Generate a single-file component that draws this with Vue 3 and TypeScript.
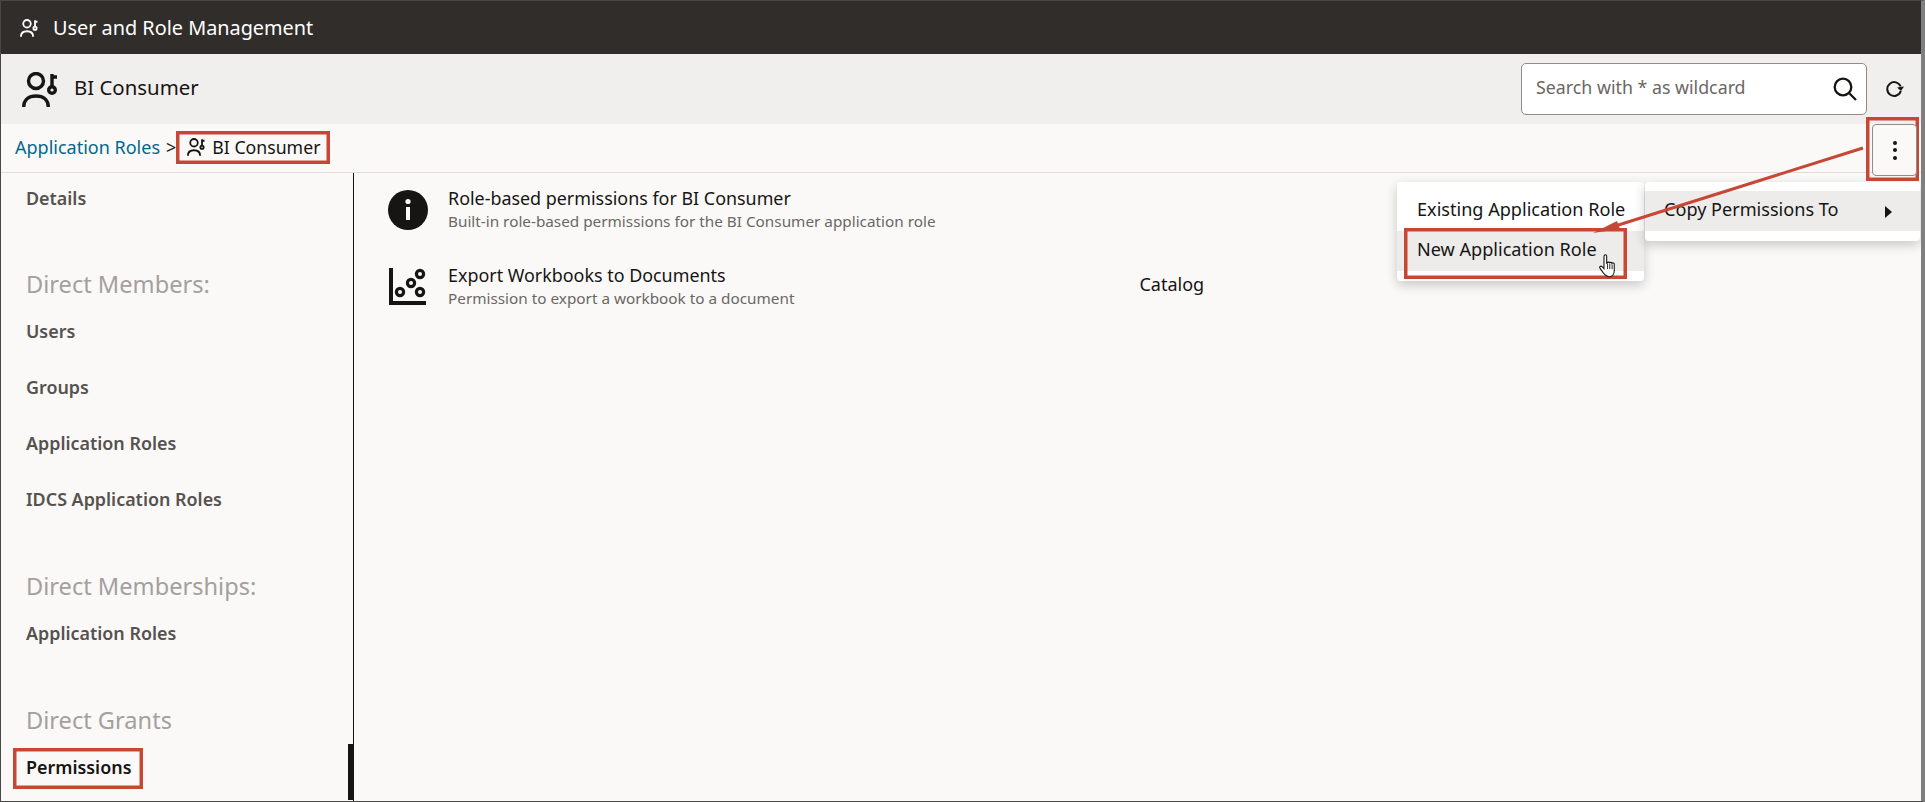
<script setup lang="ts">
const sections = [
  { title: '', items: ['Details'] },
  { title: 'Direct Members:', items: ['Users', 'Groups', 'Application Roles', 'IDCS Application Roles'] },
  { title: 'Direct Memberships:', items: ['Application Roles'] },
  { title: 'Direct Grants', items: ['Permissions'] }
]
</script>

<template>
  <div class="page">
    <header class="topbar">
      <svg class="ico-top" viewBox="0 0 36 35" fill="none" stroke="#fff" stroke-width="3.600">
        <circle cx="14" cy="9" r="7.500" />
        <path d="M1.800 35c0-7 5-11 12.200-11s12.200 4 12.200 11" />
        <circle cx="30" cy="18" r="3.300" />
        <path d="M30 2v12M30 5h5" />
      </svg>
      <span>User and Role Management</span>
    </header>

    <section class="titlebar">
      <svg class="ico-title" viewBox="0 0 36 35" fill="none" stroke="#161513" stroke-width="3.400">
        <circle cx="14" cy="9" r="7.500" />
        <path d="M1.700 35c0-7 5-11 12.300-11s12.300 4 12.300 11" />
        <circle cx="30" cy="18" r="3.300" />
        <path d="M30 2v12M30 5h5" />
      </svg>
      <span class="title">BI Consumer</span>
      <div class="search">
        <span class="placeholder">Search with * as wildcard</span>
        <svg class="ico-search" viewBox="0 0 24 24" fill="none" stroke="#161513" stroke-width="2.300">
          <circle cx="10" cy="10" r="8.300" />
          <path d="M16 16l7 7" />
        </svg>
      </div>
      <svg class="ico-refresh" viewBox="0 0 18 16" fill="none" stroke="#161513" stroke-width="2">
        <path d="M14.600 5.500A6.900 6.900 0 1 0 14.800 10" />
        <path d="M18 5.500l-3 4.500-4-3.500z" fill="#161513" stroke="none" />
      </svg>
    </section>

    <nav class="crumbbar">
      <a class="crumb-link">Application Roles</a>
      <span class="sep">&gt;</span>
      <svg class="ico-crumb" viewBox="0 0 36 35" fill="none" stroke="#161513" stroke-width="3.600">
        <circle cx="14" cy="9" r="7.500" />
        <path d="M1.800 35c0-7 5-11 12.200-11s12.200 4 12.200 11" />
        <circle cx="30" cy="18" r="3.300" />
        <path d="M30 2v12M30 5h5" />
      </svg>
      <span class="crumb-cur">BI Consumer</span>
      <button class="kebab" aria-label="More">
        <i></i><i></i><i></i>
      </button>
    </nav>

    <main class="body">
      <aside class="side">
        <div v-for="s in sections" :key="s.title" class="group">
          <h3 v-if="s.title">{{ s.title }}</h3>
          <a v-for="it in s.items" :key="it" class="side-item" :class="{ active: it === 'Permissions' }">{{ it }}</a>
        </div>
        <div class="side-mark"></div>
      </aside>
      <div class="content">
        <div class="row">
          <svg class="ico-row" viewBox="0 0 40 40">
            <circle cx="20" cy="20" r="20" fill="#161513" />
            <circle cx="20" cy="11.500" r="2.600" fill="#fbf9f8" />
            <rect x="18" y="17" width="4" height="13" fill="#fbf9f8" />
          </svg>
          <div class="row-text">
            <div class="row-title">Role-based permissions for BI Consumer</div>
            <div class="row-sub">Built-in role-based permissions for the BI Consumer application role</div>
          </div>
        </div>
        <div class="row second">
          <svg class="ico-row ico-chart" viewBox="0 0 40 40" fill="none" stroke="#161513" stroke-width="3.200">
            <path d="M3 0v35h35" stroke-width="4" />
            <circle cx="12" cy="24" r="3.600" />
            <circle cx="23" cy="15" r="3.600" />
            <circle cx="32" cy="6" r="3.600" />
            <circle cx="32" cy="24" r="3.600" />
          </svg>
          <div class="row-text">
            <div class="row-title">Export Workbooks to Documents</div>
            <div class="row-sub">Permission to export a workbook to a document</div>
          </div>
          <div class="row-cat">Catalog</div>
        </div>

        <div class="menu menu-sub">
          <div class="mi">Existing Application Role</div>
          <div class="mi active">New Application Role</div>
        </div>
        <div class="menu menu-main">
          <div class="mi active main-item">
            <span>Copy Permissions To</span>
            <span class="tri"></span>
          </div>
        </div>
      </div>
    </main>

    <svg class="annot" width="1925" height="802" viewBox="0 0 1925 802" fill="none">
      <rect x="177.750" y="132.750" width="150.500" height="29.500" stroke="#c74634" stroke-width="3.500" />
      <rect x="14.750" y="749.750" width="126.500" height="37.500" stroke="#c74634" stroke-width="3.500" />
      <rect x="1405.750" y="229.750" width="219.500" height="47.500" stroke="#c74634" stroke-width="3.500" />
      <rect x="1867.750" y="118.750" width="49.500" height="60.500" stroke="#c74634" stroke-width="3.500" />
      <path d="M1863 148L1612 227" stroke="#c74634" stroke-width="3" />
      <path d="M1593 233L1617 221L1620 229z" fill="#c74634" />
    </svg>

    <svg class="cursor" width="20" height="25" viewBox="0 0 22 28">
      <path d="M7 2.500c1.200-1 2.500-.2 2.500 1v8l.6-.2c.2-1.400 2.500-1.400 2.700 0 .4-1.200 2.500-1 2.700.3.600-1 2.400-.6 2.500.8V20c0 3.500-2 6.500-5.500 6.500S7 24 5.500 22L2 17c-1-1.600 1-3 2.400-1.700L6.500 17.500V4c0-.6.200-1.100.5-1.500z" fill="#fff" stroke="#161513" stroke-width="1.200" />
      <path d="M10.500 12v6M13 12v6M15.600 13v5" stroke="#161513" stroke-width="1" />
    </svg>
  </div>
</template>

<style>
html, body { margin: 0; background: #fbf9f8; }
</style>

<style scoped>
.page {
  position: relative;
  width: 1925px;
  height: 802px;
  box-sizing: border-box;
  border: 1px solid #4a4846;
  border-right: 4px solid #7f7f7f;
  overflow: hidden;
  display: flex;
  flex-direction: column;
  background: #fbf9f8;
  color: #161513;
  font-family: "Noto Sans", "Open Sans", sans-serif;
}
.topbar {
  height: 53px;
  flex: none;
  display: flex;
  align-items: center;
  gap: 15px;
  padding-left: 19px;
  background: #312d2a;
  color: #fff;
  font-size: 19.850px;
}
.ico-top { width: 18px; height: 18px; }
.titlebar {
  height: 70px;
  flex: none;
  display: flex;
  align-items: center;
  background: #f1efed;
  padding-left: 21px;
}
.ico-title { width: 36px; height: 35px; margin-right: 16px; }
.title { font-size: 20.400px; position: relative; top: -2px; }
.search {
  margin-left: auto;
  box-sizing: border-box;
  width: 346px;
  height: 52px;
  background: #fff;
  border: 1px solid #8f8c8a;
  border-radius: 5px;
  display: flex;
  align-items: center;
  padding: 0 9px 5px 14px;
  justify-content: space-between;
}
.placeholder { font-size: 17.800px; color: #6b6764; }
.ico-search { width: 24px; height: 24px; margin-top: 5px; }
.ico-refresh { width: 18px; height: 16px; margin: 0 17px 0 19px; }
.crumbbar {
  height: 49px;
  flex: none;
  box-sizing: border-box;
  display: flex;
  align-items: center;
  padding: 0 0 3px 14px;
  border-bottom: 1px solid #dfdcd9;
  font-size: 18px;
}
.crumb-link { color: #00688c; }
.sep { margin-left: 6px; }
.ico-crumb { width: 18px; height: 18px; margin: 0 7px 0 11px; flex: none; }
.crumb-cur { font-size: 17.700px; }
.kebab {
  position: relative;
  z-index: 1;
  align-self: flex-start;
  margin-left: auto;
  margin-right: 4px;
  box-sizing: border-box;
  width: 45px;
  height: 52px;
  background: #fbf9f8;
  border: 1px solid #8f8c8a;
  border-radius: 4px;
  display: flex;
  flex-direction: column;
  align-items: center;
  justify-content: center;
  gap: 3.500px;
  padding: 0;
}
.kebab i { width: 4px; height: 4px; border-radius: 50%; background: #161513; }
.body { flex: 1; display: flex; min-height: 0; }
.side {
  position: relative;
  box-sizing: border-box;
  width: 353px;
  flex: none;
  border-right: 1px solid #161513;
  padding-left: 25px;
  display: flex;
  flex-direction: column;
}
.group { display: flex; flex-direction: column; margin-top: 44px; }
.group:first-child { margin-top: 0; }
.group:first-child .side-item { height: 50px; }
.group:nth-child(2) { margin-top: 46px; }
.group h3 {
  margin: 0 0 4px;
  font-size: 23.600px;
  font-weight: 400;
  color: #a4a09d;
  line-height: 30px;
}
.side-item {
  height: 56px;
  font-size: 17.900px;
  font-weight: 600;
  color: #56524f;
  display: flex;
  align-items: center;
}
.side-item.active { color: #161513; }
.side-mark {
  position: absolute;
  right: -1px;
  bottom: 1px;
  width: 6px;
  height: 56px;
  background: #161513;
}
.content { position: relative; flex: 1; padding: 13px 0 0 34px; }
.row { display: flex; align-items: flex-start; height: 46px; }
.row.second { margin-top: 31px; }
.ico-row { width: 40px; height: 40px; flex: none; margin: 4px 20px 0 0; }
.ico-chart { margin-top: 5px; }
.row-title { font-size: 17.900px; line-height: 24px; }
.row-sub { font-size: 15.300px; line-height: 22px; color: #6b6764; }
.row-cat { margin: 9px 0 0 345px; font-size: 18px; line-height: 24px; }
.menu {
  position: absolute;
  top: 9px;
  background: #fff;
  border-radius: 4px;
  box-shadow: 0 4px 12px rgba(0, 0, 0, .2);
  padding: 9px 0 10px;
}
.menu-sub { left: 1043px; width: 247px; }
.menu-main { left: 1291px; width: 275px; }
.mi {
  height: 40px;
  display: flex;
  align-items: center;
  padding: 0 0 5px 20px;
  font-size: 18.100px;
  box-sizing: border-box;
}
.mi.active { background: #edecea; }
.main-item { justify-content: space-between; padding: 0 28px 5px 19px; }
.tri {
  margin-top: 7px;
  width: 0;
  height: 0;
  border-left: 7px solid #161513;
  border-top: 6px solid transparent;
  border-bottom: 6px solid transparent;
}
.annot { position: absolute; left: -1px; top: -1px; pointer-events: none; }
.cursor { position: absolute; left: 1597px; top: 252px; }
</style>
